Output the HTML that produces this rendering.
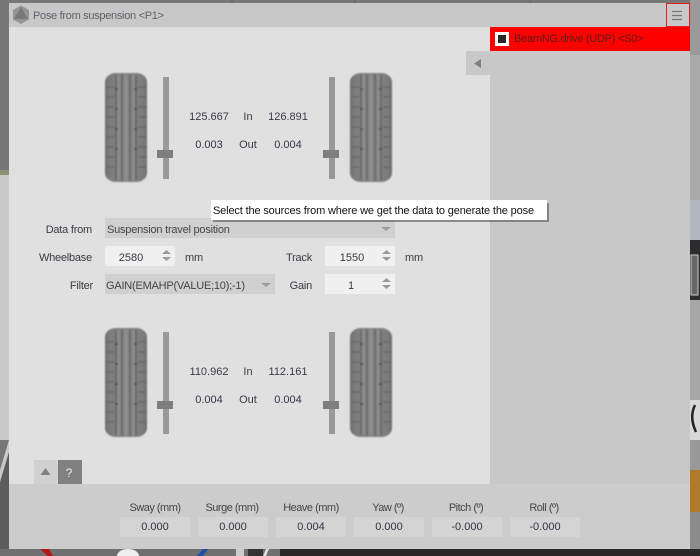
<!DOCTYPE html>
<html><head><meta charset="utf-8"><style>
html,body{margin:0;padding:0;background:#777}
#r{position:relative;width:700px;height:556px;overflow:hidden;font:11px "Liberation Sans",sans-serif;color:#3a3a44}
#r div{position:absolute}
.t{white-space:nowrap;line-height:14px;height:14px}
.c{text-align:center}.e{text-align:right}
.s{letter-spacing:-.22px}
.o{background:#d4d4d4;height:20px;width:70px;top:517px;text-align:center;line-height:21px;color:#334}
.l{top:501px;width:90px;text-align:center;color:#444;letter-spacing:-.5px}
</style></head><body><div id="r">
<svg width="700" height="556" style="position:absolute;left:0;top:0">
<defs>
<linearGradient id="tg" x1="0" x2="1" y1="0" y2="0"><stop offset="0" stop-color="#6e6e6e"/><stop offset=".12" stop-color="#7c7c7c"/><stop offset=".5" stop-color="#868686"/><stop offset=".88" stop-color="#7c7c7c"/><stop offset="1" stop-color="#6e6e6e"/></linearGradient>
<filter id="b" x="-10%" y="-10%" width="120%" height="120%"><feGaussianBlur stdDeviation=".8"/></filter>
<g id="tire" filter="url(#b)">
<rect x="0" y="0" width="42" height="109" rx="11" ry="9" fill="url(#tg)"/>
<path d="M11 2V107M17 1V108M25 1V108M31 2V107" stroke="#5c5c5c" stroke-width="1.200" fill="none"/>
<path d="M13.500 2V107M28.500 2V107M21 2V107" stroke="#949494" stroke-width="1.400" fill="none"/>
<path d="M1 14H9M1 24H9M1 34H9M1 44H9M1 54H9M1 64H9M1 74H9M1 84H9M1 94H9M33 14H41M33 24H41M33 34H41M33 44H41M33 54H41M33 64H41M33 74H41M33 84H41M33 94H41" stroke="#5e5e5e" stroke-width="1.100" fill="none"/>
<path d="M10 16h3M10 36h3M10 56h3M10 76h3M29 16h3M29 36h3M29 56h3M29 76h3" stroke="#444" stroke-width="1.400" fill="none"/>
</g>
<path id="spin" d="M4.500 0L9 4H0ZM0 7H9L4.500 11Z" fill="#9a9a9a"/>
</defs>
<rect width="700" height="170" fill="#777"/>
<path d="M232 0V3M355 0V3M530 0V3" stroke="#666"/>
<rect x="0" y="170" width="9" height="5" fill="#8e8e70"/>
<rect x="0" y="175" width="9" height="265" fill="#c9c9c7"/>
<path d="M0 470L9 440V556H0Z" fill="#c9c9c7"/>
<path d="M0 556V482L9 452V556Z" fill="#5c5c5c"/>
<rect x="690" y="0" width="10" height="55" fill="#9a9a9a"/>
<rect x="690" y="55" width="10" height="145" fill="#aaa"/>
<rect x="690" y="200" width="10" height="40" fill="#b2b6be"/>
<rect x="690" y="240" width="10" height="60" fill="#2c2c2e"/>
<rect x="691" y="255" width="7" height="40" fill="#666" stroke="#ccc"/>
<rect x="690" y="300" width="10" height="100" fill="#a6a6a6"/>
<rect x="690" y="400" width="10" height="40" fill="#d8d8d8"/>
<path d="M695 405q-6 12 1 27" stroke="#222" stroke-width="2.500" fill="none"/>
<rect x="690" y="440" width="10" height="30" fill="#999"/>
<rect x="690" y="470" width="10" height="42" fill="#b07a28"/>
<rect x="690" y="512" width="10" height="37" fill="#8c8c8c"/>
<rect x="0" y="549" width="280" height="7" fill="#707070"/>
<rect x="280" y="549" width="420" height="7" fill="#2a2828"/>
<path d="M40 549l8 7h5l-4-7z" fill="#b01818"/>
<path d="M203 549l-6 7h6l5-7z" fill="#1c50a8"/>
<ellipse cx="128" cy="556" rx="11" ry="7" fill="#eee"/>
<rect x="236" y="549" width="8" height="7" fill="#ccc"/>
<rect x="248" y="549" width="15" height="7" fill="#333"/>
<path d="M263 556l3-7h3l-3 7z" fill="#ddd"/>
<rect x="9" y="3" width="681" height="546" fill="#cccccc"/>
<rect x="9" y="3" width="681" height="24" fill="#c8c8c8"/>
<rect x="9" y="27" width="481" height="457" fill="#e0e0e0"/>
<rect x="490" y="27" width="200" height="457" fill="#c8c8c8"/>
<path d="M21 5.500L29 10V19.500L21 24L13 19.500V10Z" fill="#949494"/><path d="M21 7L28 19H14Z" fill="#787878"/>
<rect x="666.500" y="3.500" width="23" height="23" fill="none" stroke="#e02020"/>
<path d="M672 11.500H682M672 15.500H682M672 19.500H682" stroke="#777" stroke-width="1.200"/>
<rect x="490" y="27" width="200" height="24" fill="#f00"/>
<rect x="495" y="32" width="14" height="14" fill="#fff"/><rect x="498" y="35" width="8" height="8" fill="#2a2a2a"/>
<rect x="466" y="51" width="24" height="24" fill="#c8c8c8"/>
<path d="M474 63.500L481 59V68Z" fill="#808080"/>
<use href="#tire" x="105" y="73"/><use href="#tire" x="350" y="73"/>
<use href="#tire" x="105" y="328"/><use href="#tire" x="350" y="328"/>
<path d="M163 77h6v102h-6zM329 77h6v102h-6zM163 332h6v102h-6zM329 332h6v102h-6z" fill="#999"/>
<path d="M157 150h16v8h-16zM323 150h16v8h-16zM157 401h16v8h-16zM323 401h16v8h-16z" fill="#7e7e7e"/>
<rect x="105" y="218" width="290" height="20" fill="#d0d0d0"/>
<path d="M381 227h10l-5 4z" fill="#9a9a9a"/>
<rect x="105" y="274" width="170" height="20" fill="#d0d0d0"/>
<path d="M261 283h10l-5 4z" fill="#9a9a9a"/>
<rect x="105" y="246" width="70" height="20" fill="#f0f0f0"/>
<rect x="325" y="246" width="70" height="20" fill="#f0f0f0"/>
<rect x="325" y="274" width="70" height="20" fill="#f0f0f0"/>
<use href="#spin" x="162" y="250"/><use href="#spin" x="382" y="250"/><use href="#spin" x="382" y="278"/>
<rect x="34" y="460" width="24" height="24" fill="#d0d0d0"/>
<path d="M40.500 475L45.500 468L50.500 475Z" fill="#808080"/>
<rect x="58" y="460" width="24" height="24" fill="#808080"/>
<rect x="213" y="203" width="336" height="19" fill="#666" opacity=".7"/>
<rect x="211" y="200" width="336" height="20" fill="#fff"/>
</svg>
<div class="t" style="left:33px;top:9px;color:#5e5e68;letter-spacing:-.3px">Pose from suspension &lt;P1&gt;</div>
<div class="t" style="left:514px;top:32px;color:#5a1a1a;letter-spacing:-.25px">BeamNG.drive (UDP) &lt;S0&gt;</div>
<div class="t c" style="left:179px;top:110px;width:60px">125.667</div>
<div class="t c" style="left:238px;top:110px;width:20px">In</div>
<div class="t c" style="left:258px;top:110px;width:60px">126.891</div>
<div class="t c" style="left:179px;top:138px;width:60px;color:#334">0.003</div>
<div class="t c" style="left:233px;top:138px;width:30px">Out</div>
<div class="t c" style="left:258px;top:138px;width:60px;color:#334">0.004</div>
<div class="t" style="left:213px;top:204px;color:#111;letter-spacing:-.15px">Select the sources from where we get the data to generate the pose</div>
<div class="t e s" style="left:20px;top:223px;width:72px">Data from</div>
<div class="t s" style="left:107px;top:223px;color:#444">Suspension travel position</div>
<div class="t e s" style="left:20px;top:251px;width:72px">Wheelbase</div>
<div class="t c" style="left:105px;top:251px;width:52px">2580</div>
<div class="t s" style="left:185px;top:251px">mm</div>
<div class="t e s" style="left:270px;top:251px;width:42px">Track</div>
<div class="t c" style="left:325px;top:251px;width:54px">1550</div>
<div class="t s" style="left:405px;top:251px">mm</div>
<div class="t e s" style="left:20px;top:279px;width:73px">Filter</div>
<div class="t s" style="left:106px;top:279px;color:#444">GAIN(EMAHP(VALUE;10);-1)</div>
<div class="t e s" style="left:270px;top:279px;width:42px">Gain</div>
<div class="t c" style="left:325px;top:279px;width:52px">1</div>
<div class="t c" style="left:179px;top:365px;width:60px">110.962</div>
<div class="t c" style="left:238px;top:365px;width:20px">In</div>
<div class="t c" style="left:258px;top:365px;width:60px">112.161</div>
<div class="t c" style="left:179px;top:393px;width:60px;color:#334">0.004</div>
<div class="t c" style="left:233px;top:393px;width:30px">Out</div>
<div class="t c" style="left:258px;top:393px;width:60px;color:#334">0.004</div>
<div class="t c" style="left:57px;top:466px;width:24px;color:#eee;font-size:12px">?</div>
<div class="t l" style="left:110px">Sway (mm)</div><div class="o" style="left:120px">0.000</div>
<div class="t l" style="left:187px">Surge (mm)</div><div class="o" style="left:198px">0.000</div>
<div class="t l" style="left:266px">Heave (mm)</div><div class="o" style="left:276px">0.004</div>
<div class="t l" style="left:343px">Yaw (º)</div><div class="o" style="left:354px">0.000</div>
<div class="t l" style="left:421px">Pitch (º)</div><div class="o" style="left:432px">-0.000</div>
<div class="t l" style="left:499px">Roll (º)</div><div class="o" style="left:510px">-0.000</div>
</div></body></html>
